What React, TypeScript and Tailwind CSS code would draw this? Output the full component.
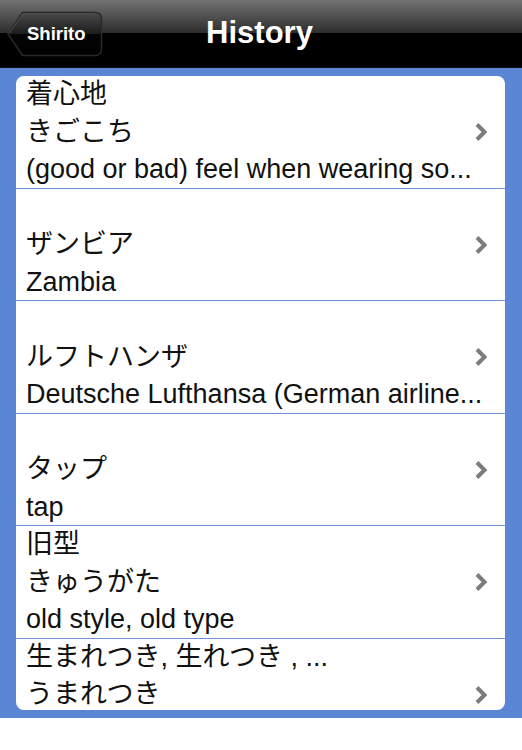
import React from 'react';

type Entry = {
  word: string | null;
  reading: string;
  meaning: string;
};

const ENTRIES: Entry[] = [
  { word: '着心地', reading: 'きごこち', meaning: '(good or bad) feel when wearing so...' },
  { word: null, reading: 'ザンビア', meaning: 'Zambia' },
  { word: null, reading: 'ルフトハンザ', meaning: 'Deutsche Lufthansa (German airline...' },
  { word: null, reading: 'タップ', meaning: 'tap' },
  { word: '旧型', reading: 'きゅうがた', meaning: 'old style, old type' },
  { word: '生まれつき, 生れつき , ...', reading: 'うまれつき', meaning: '' },
];

const FONT = "font-['Liberation_Sans','Noto_Sans_CJK_JP',sans-serif]";

function Chevron() {
  return (
    <svg width="14" height="20" viewBox="0 0 14 20" className="shrink-0">
      <path d="M3 2.5 L10.5 10 L3 17.5" fill="none" stroke="#7c7c7c" strokeWidth="4" strokeLinejoin="miter" />
    </svg>
  );
}

function BackButton() {
  return (
    <div className="relative w-[96px] h-[46px]">
      <svg width="96" height="46" viewBox="0 0 96 46" className="absolute inset-0">
        <defs>
          <linearGradient id="bb" x1="0" y1="0" x2="0" y2="1">
            <stop offset="0" stopColor="#4a4a4a" />
            <stop offset="0.5" stopColor="#1c1c1c" />
            <stop offset="0.5" stopColor="#050505" />
            <stop offset="1" stopColor="#000" />
          </linearGradient>
        </defs>
        <path
          d="M1 23 L15.5 1.5 L88 1.5 Q94.5 1.5 94.5 8 L94.5 38 Q94.5 44.5 88 44.5 L15.5 44.5 Z"
          fill="url(#bb)"
          stroke="#2a2a2a"
          strokeWidth="1.5"
        />
        <path d="M2.5 22 L16 2.8 L88 2.8" fill="none" stroke="#5a5a5a" strokeWidth="0.8" />
      </svg>
      <span className="absolute left-[20px] top-0 h-full flex items-center text-white font-bold text-[18.5px]">
        Shirito
      </span>
    </div>
  );
}

function Row({ entry }: { entry: Entry }) {
  return (
    <div className="h-[112.5px] shrink-0 border-b-[1.5px] border-[#6f91d6] pl-[10px] pr-[17px] text-[27px] leading-[37.5px] text-[#111]">
      <div className="h-[37.5px] whitespace-nowrap">{entry.word ?? ''}</div>
      <div className="h-[37.5px] flex items-center justify-between">
        <span className="whitespace-nowrap">{entry.reading}</span>
        <Chevron />
      </div>
      <div className="h-[37.5px] whitespace-nowrap">{entry.meaning}</div>
    </div>
  );
}

export default function App() {
  return (
    <div className={`w-[522px] h-[750px] bg-white ${FONT}`}>
      <div className="h-[68px] flex items-center relative bg-[linear-gradient(to_bottom,#727272_0%,#2c2c2c_50%,#000_50%,#000_100%)] border-b border-[#111]">
        <div className="pl-[7px]">
          <BackButton />
        </div>
        <div className="absolute inset-x-0 top-0 h-full flex items-center justify-center pointer-events-none">
          <span className="text-white font-bold text-[31px] pr-[3px]">History</span>
        </div>
      </div>
      <div className="h-[650px] bg-[#5a86d3] pt-[8px] pl-[16px] pr-[17px]">
        <div className="h-[634px] bg-white rounded-[8px] overflow-hidden flex flex-col">
          {ENTRIES.map((e, i) => (
            <Row key={i} entry={e} />
          ))}
        </div>
      </div>
    </div>
  );
}
